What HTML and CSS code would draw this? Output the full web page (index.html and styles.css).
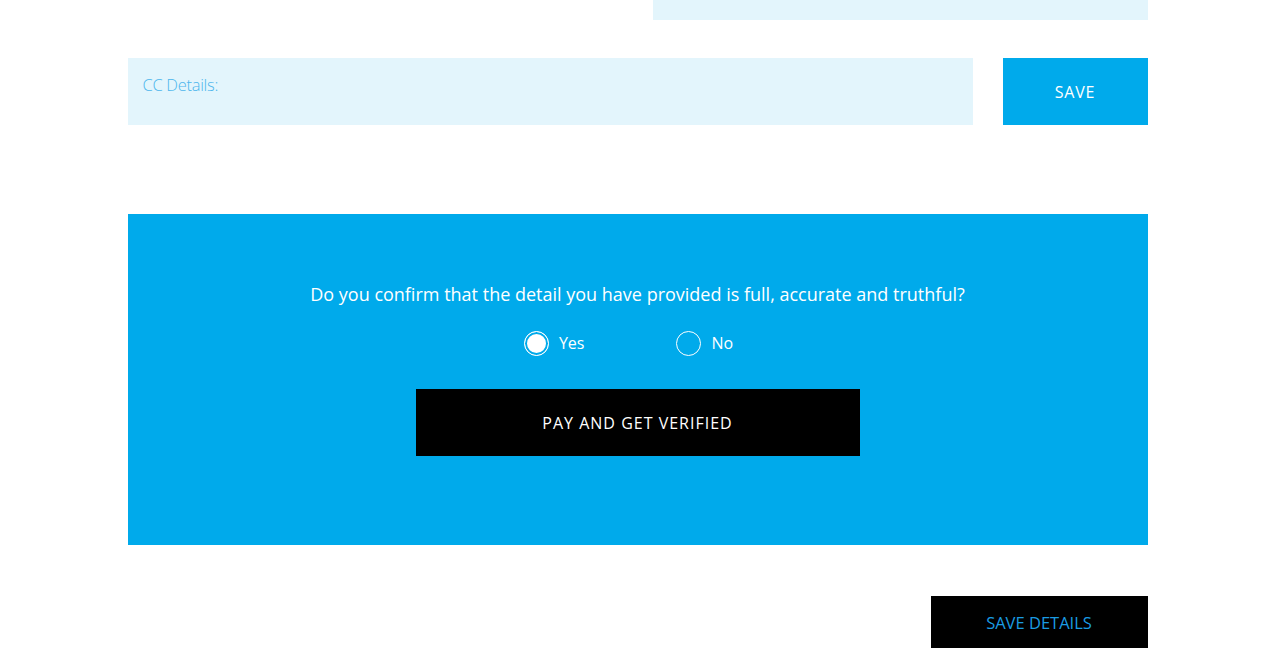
FILE: index.html
```html
<!DOCTYPE html>
<html>
<head>
<meta charset="utf-8">
<link rel="stylesheet" href="styles.css">
</head>
<body>
<div class="page">
  <div class="top-row">
    <div class="top-box"></div>
  </div>
  <div class="cc-row">
    <div class="cc-field">CC Details:</div>
    <button class="save-btn">SAVE</button>
  </div>
  <section class="confirm">
    <p class="question">Do you confirm that the detail you have provided is full, accurate and truthful?</p>
    <div class="radios">
      <label class="radio"><span class="dot checked"></span>Yes</label>
      <label class="radio"><span class="dot"></span>No</label>
    </div>
    <button class="pay-btn">PAY AND GET VERIFIED</button>
  </section>
  <div class="bottom-row">
    <button class="save-details">SAVE DETAILS</button>
  </div>
</div>
</body>
</html>
```
FILE: styles.css
```css
* { box-sizing: border-box; }
body {
  margin: 0;
  background: #fff;
  font-family: "Open Sans", "Liberation Sans", sans-serif;
}
.page {
  width: 1020px;
  margin: 0 auto;
}
.top-row {
  display: flex;
  justify-content: flex-end;
}
.top-box {
  width: 495px;
  height: 20px;
  background: #e3f5fc;
}
.cc-row {
  display: flex;
  gap: 30px;
  margin-top: 38px;
}
.cc-field {
  flex: 1;
  height: 67px;
  background: #e3f5fc;
  color: #4db6ec;
  font-size: 16.5px;
  font-weight: 300;
  letter-spacing: -0.3px;
  padding: 15px 15px;
}
.save-btn {
  width: 145px;
  height: 67px;
  border: 0;
  background: #00aaeb;
  color: #fff;
  font-family: inherit;
  font-size: 16px;
  letter-spacing: 0.8px;
  padding: 0;
}
.confirm {
  margin-top: 89px;
  height: 331px;
  background: #00aaeb;
  display: flex;
  flex-direction: column;
  align-items: center;
  padding-top: 68px;
}
.question {
  margin: 0;
  color: #fff;
  font-size: 18px;
  line-height: 24px;
}
.radios {
  display: flex;
  gap: 92px;
  margin-top: 25px;
  padding-right: 18px;
}
.radio {
  display: flex;
  align-items: center;
  gap: 10px;
  color: #fff;
  font-size: 16px;
  height: 24px;
}
.dot {
  width: 25px;
  height: 25px;
  border-radius: 50%;
  border: 1px solid #fff;
  display: inline-block;
}
.dot.checked {
  background: #fff;
  box-shadow: inset 0 0 0 2px #00aaeb;
}
.pay-btn {
  margin-top: 34px;
  width: 444px;
  height: 67px;
  border: 0;
  background: #000;
  color: #fff;
  font-family: inherit;
  font-size: 16px;
  letter-spacing: 1px;
  padding: 0;
}
.bottom-row {
  display: flex;
  justify-content: flex-end;
  margin-top: 51px;
}
.save-details {
  width: 217px;
  height: 52px;
  border: 0;
  background: #000;
  color: #1a9be2;
  font-family: inherit;
  font-size: 16.5px;
  padding: 0;
}
```
